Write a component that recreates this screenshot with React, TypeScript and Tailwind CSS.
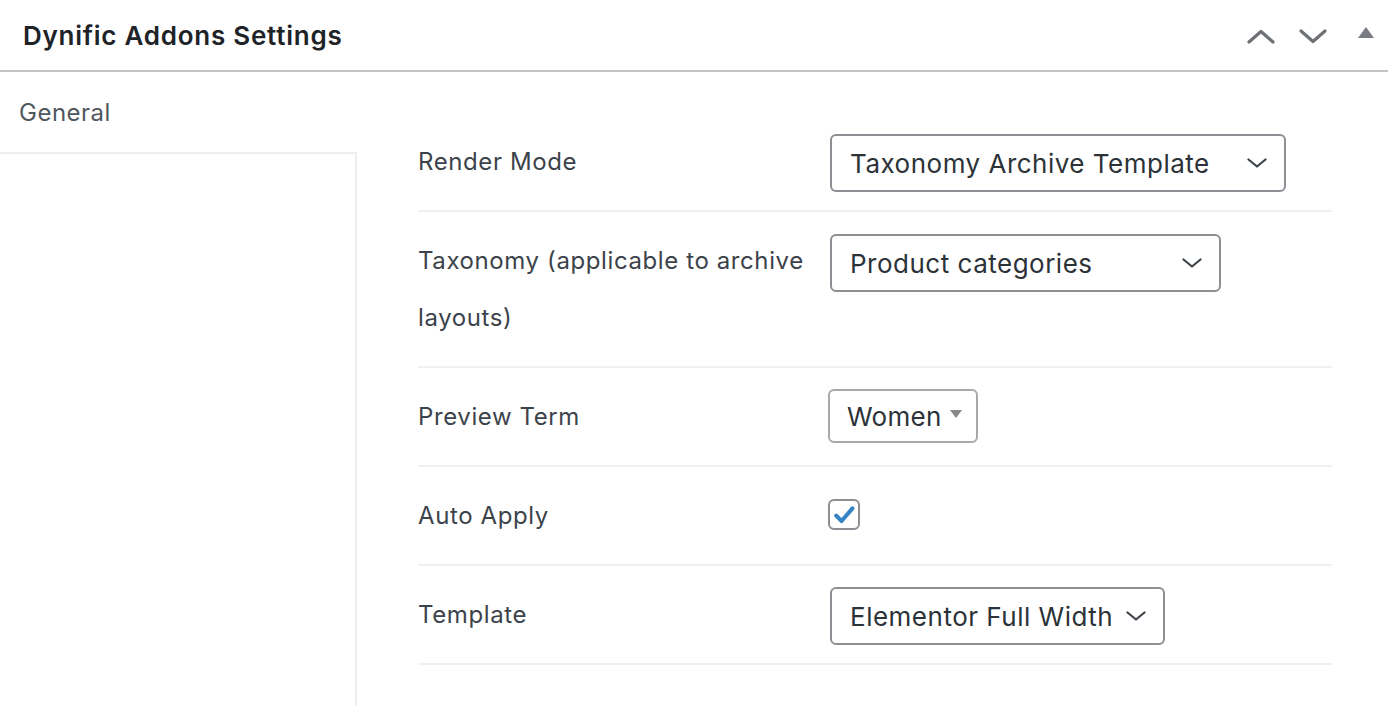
import type { ReactNode } from 'react';

function Chevron({ className }: { className?: string }) {
  return (
    <svg viewBox="0 0 20 10" className={className} fill="none" stroke="currentColor" strokeWidth={2.2} strokeLinecap="round" strokeLinejoin="round">
      <path d="M1.5 1.5 L10 8.5 L18.5 1.5" />
    </svg>
  );
}

function Select({ value, width }: { value: string; width: string }) {
  return (
    <div className={`${width} h-[58px] flex items-center justify-between pl-[18px] pr-[17px] border-2 border-[#8c8f94] rounded-[6px] bg-white text-[26px] tracking-[0.5px] text-[#2c3338]`}>
      <span className="whitespace-nowrap">{value}</span>
      <Chevron className="w-[20px] h-[10px] text-[#3c434a] shrink-0" />
    </div>
  );
}

function Row({ label, children, offset = 'pt-[21px]' }: { label: ReactNode; children: ReactNode; offset?: string }) {
  return (
    <div className="flex border-b-2 border-[#f0f0f1]">
      <div className="w-[412px] shrink-0 pr-[12px] py-[20px] leading-[57px] text-[24px] tracking-[0.6px] text-[#3c434a]">{label}</div>
      <div className={`flex-1 ${offset}`}>{children}</div>
    </div>
  );
}

export default function App() {
  return (
    <div className="w-[1388px] h-[706px] bg-white overflow-hidden flex flex-col" style={{ fontFamily: 'Inter, "Noto Sans", sans-serif' }}>
      {/* postbox header */}
      <div className="h-[72px] shrink-0 flex items-center justify-between pl-[23px] pr-[14px] border-b-2 border-[#c3c4c7]">
        <h2 className="text-[26px] font-semibold text-[#1d2327] tracking-[0.75px]">Dynific Addons Settings</h2>
        <div className="flex items-center text-[#6d7075] mt-[2px]">
          <svg viewBox="0 0 28 15" className="w-[28px] h-[15px]" fill="none" stroke="currentColor" strokeWidth={3.2} strokeLinecap="round" strokeLinejoin="round">
            <path d="M2 13 L14 2.5 L26 13" />
          </svg>
          <svg viewBox="0 0 28 15" className="w-[28px] h-[15px] ml-[24px]" fill="none" stroke="currentColor" strokeWidth={3.2} strokeLinecap="round" strokeLinejoin="round">
            <path d="M2 2 L14 12.5 L26 2" />
          </svg>
          <svg viewBox="0 0 16 11" className="w-[16px] h-[11px] ml-[31px] -mt-[8px]">
            <path d="M8 0 L16 11 L0 11 Z" fill="#787c82" />
          </svg>
        </div>
      </div>

      <div className="flex flex-1 min-h-0">
        {/* tabs */}
        <div className="w-[357px] shrink-0 flex flex-col">
          <div className="h-[80px] flex items-center pl-[19px] pt-[2px] text-[24px] tracking-[0.5px] text-[#50575e]">General</div>
          <div className="flex-1 border-t-2 border-r-2 border-[#eeeeee]" />
        </div>

        {/* settings table */}
        <div className="flex-1 pl-[61px] pr-[56px] pt-[41px]">
          <Row label="Render Mode">
            <Select value="Taxonomy Archive Template" width="w-[456px]" />
          </Row>
          <Row label="Taxonomy (applicable to archive layouts)" offset="pt-[22px]">
            <Select value="Product categories" width="w-[391px]" />
          </Row>
          <Row label="Preview Term">
            <div className="ml-[-2px] w-[150px] h-[54px] flex items-center justify-between pl-[17px] pr-[14px] border-2 border-[#a7aaad] rounded-[6px] text-[26px] tracking-[0.3px] text-[#2c3338]">
              <span>Women</span>
              <svg viewBox="0 0 12 8" className="w-[12px] h-[8px] -mt-[4px]">
                <path d="M0 0 L12 0 L6 8 Z" fill="#888888" />
              </svg>
            </div>
          </Row>
          <Row label="Auto Apply" offset="pt-[32px]">
            <div className="ml-[-2px] w-[32px] h-[31px] border-2 border-[#8c8f94] rounded-[6px] flex items-center justify-center">
              <svg viewBox="0 0 20 20" className="w-[24px] h-[24px]">
                <path d="M3.5 10.5 L8 15 L17 4.5" fill="none" stroke="#3582c4" strokeWidth={3.4} strokeLinecap="round" strokeLinejoin="round" />
              </svg>
            </div>
          </Row>
          <Row label="Template">
            <Select value="Elementor Full Width" width="w-[335px]" />
          </Row>
        </div>
      </div>
    </div>
  );
}
